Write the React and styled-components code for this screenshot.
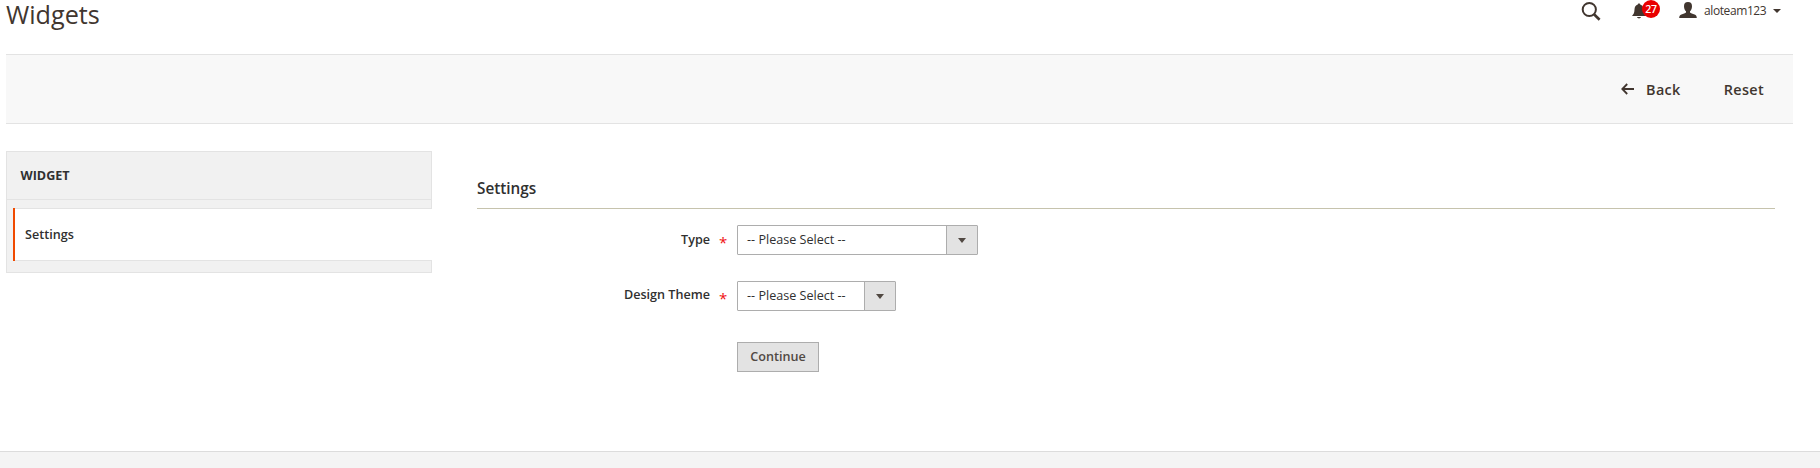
import React from 'react';
import styled, { createGlobalStyle } from 'styled-components';

const GlobalStyle = createGlobalStyle`
  * { box-sizing: border-box; }
  body {
    margin: 0;
    background: #fff;
    color: #303030;
    font-family: 'Open Sans', 'Noto Sans', sans-serif;
    font-size: 12.6px;
    line-height: 17px;
  }
`;

const Page = styled.div`
  display: flex;
  flex-direction: column;
  height: 468px;
`;

const Header = styled.header`
  display: flex;
  justify-content: space-between;
  height: 54px;
  padding: 0 39px 0 6px;
`;

const Title = styled.h1`
  margin: 0;
  color: #41362f;
  font-size: 25.2px;
  font-weight: 400;
  line-height: 28px;
`;

const Tools = styled.div`
  display: flex;
  align-items: flex-start;
  color: #41362f;
`;

const Tool = styled.div`
  position: relative;
  display: flex;
  margin-right: ${(p) => p.$gap || 0}px;
  padding-top: ${(p) => p.$top || 0}px;
`;

const Badge = styled.span`
  position: absolute;
  left: 10px;
  top: 0;
  width: 18px;
  height: 18px;
  border-radius: 9px;
  background: #e90000;
  color: #fff;
  font-size: 10.5px;
  font-weight: 600;
  line-height: 18px;
  letter-spacing: -0.3px;
  text-align: center;
`;

const Account = styled.div`
  display: flex;
  align-items: flex-start;
`;

const UserName = styled.span`
  width: 63px;
  margin: 2px 6px 0 7px;
  font-size: 12px;
  line-height: 17px;
  letter-spacing: -0.4px;
  white-space: nowrap;
`;

const Caret = styled.span`
  width: 0;
  height: 0;
  margin-top: ${(p) => p.$top || 0}px;
  border: solid transparent;
  border-width: ${(p) => p.$size || 4}px ${(p) => p.$half || 3.5}px 0;
  border-top-color: ${(p) => p.$color || '#41362f'};
`;

const ActionBar = styled.div`
  display: flex;
  justify-content: flex-end;
  align-items: center;
  gap: 43px;
  height: 70px;
  margin: 0 27px 0 6px;
  padding: 2px 29px 0 0;
  border: solid #e3e3e3;
  border-width: 1px 0;
  background: #f8f8f8;
`;

const Action = styled.button`
  display: flex;
  align-items: center;
  padding: 0;
  border: 0;
  background: none;
  color: #41362f;
  font: 600 14.4px/20px 'Open Sans', sans-serif;
  letter-spacing: 0.36px;

  svg { margin: -3px 12px 0 0; }
`;

const Body = styled.main`
  display: flex;
  flex: 1;
  align-items: flex-start;
  padding: 27px 45px 0 6px;
`;

const Nav = styled.nav`
  width: 426px;
  height: 122px;
  margin-right: 45px;
  border: 1px solid #e3e3e3;
  background: #f1f1f1;
`;

const NavTitle = styled.div`
  height: 48px;
  padding: 15px 13.5px 0;
  border-bottom: 1px solid #e3e3e3;
  font-weight: 700;
`;

const NavItem = styled.div`
  position: relative;
  height: 53px;
  margin: 8px -1px 0 6px;
  padding: 17px 12px 0;
  border: solid #e3e3e3;
  border-width: 1px 0;
  background: #fff;
  font-weight: 600;

  &::before {
    content: '';
    position: absolute;
    left: 0;
    top: -1px;
    bottom: -1px;
    width: 2px;
    background: #f04a00;
  }
`;

const Form = styled.section`
  flex: 1;
`;

const Legend = styled.h2`
  height: 58px;
  margin: 0 0 16px;
  padding-top: 27px;
  border-bottom: 1px solid #c6c3ad;
  font-size: 15.3px;
  font-weight: 600;
  line-height: 21px;
`;

const Field = styled.div`
  display: flex;
  height: 30px;
  margin-bottom: ${(p) => p.$after || 0}px;
`;

const Label = styled.label`
  width: 233px;
  padding-top: ${(p) => p.$top}px;
  font-weight: 600;
  text-align: right;
`;

const Required = styled.span`
  width: 27px;
  padding: 9px 0 0 9px;
  color: #f01010;
  font-size: 15px;
  line-height: 17px;
`;

const Select = styled.div`
  display: flex;
  width: ${(p) => p.$width}px;
  height: 30px;
  border: 1px solid #adadad;
  border-radius: 1px;
  background: #fff;
`;

const SelectValue = styled.span`
  flex: 1;
  padding: 5px 0 0 9px;
`;

const SelectArrow = styled.span`
  display: flex;
  align-items: center;
  justify-content: center;
  width: 31px;
  border-left: 1px solid #adadad;
  background: #e3e3e3;
`;

const Button = styled.button`
  width: 82px;
  height: 30px;
  margin-left: 260px;
  padding: 0 0 1px;
  border: 1px solid #adadad;
  background: #e3e3e3;
  color: #514943;
  font: 600 12.6px/17px 'Open Sans', sans-serif;
`;

const Footer = styled.footer`
  height: 17px;
  border-top: 1px solid #dcdcdc;
  background: #f4f4f4;
`;

const SearchIcon = () => (
  <svg width="20" height="20" viewBox="0 0 20 20" fill="none" stroke="currentColor">
    <circle cx="8.3" cy="8.5" r="6.6" strokeWidth="2" />
    <path d="M13 13.2l5.6 5.5" strokeWidth="2.6" />
  </svg>
);

const BellIcon = () => (
  <svg width="14" height="16" viewBox="0 0 14 16" fill="currentColor">
    <path d="M7 0.4c.8 0 1.2.5 1.2 1.2C10.4 2.3 11.4 4 11.5 6.5c.1 3 .7 4.6 2.5 6.5H0c1.8-1.9 2.4-3.5 2.5-6.5C2.6 4 3.6 2.3 5.8 1.6 5.8.9 6.2.4 7 .4z" />
    <path d="M5 14h4c-.4 1-1.1 1.4-2 1.4S5.4 15 5 14z" />
  </svg>
);

const UserIcon = () => (
  <svg width="18" height="16" viewBox="0 0 18 16" fill="currentColor">
    <path d="M9 0c2.7 0 4.1 1.6 4 4.2-.1 2.4-.8 4-2 5v1.3c.7.8 2.7 1.2 4.6 2 1.5.6 2.2 1.4 2.2 3.500H.2c0-2.100.7-2.900 2.200-3.500 1.900-.8 3.900-1.200 4.600-2V9.200C5.800 8.200 5.100 6.600 5 4.200 4.900 1.600 6.300 0 9 0z" />
  </svg>
);

const BackIcon = () => (
  <svg width="13" height="12" viewBox="0 0 13 12" fill="none" stroke="currentColor" strokeWidth="1.8">
    <path d="M6.2 1L1.3 6l4.9 5M1.5 6H13" />
  </svg>
);

const SelectField = ({ label, width, after, labelTop }) => (
  <Field $after={after}>
    <Label $top={labelTop}>{label}</Label>
    <Required>*</Required>
    <Select $width={width}>
      <SelectValue>-- Please Select --</SelectValue>
      <SelectArrow>
        <Caret $color="#514943" $half={4} $size={5} />
      </SelectArrow>
    </Select>
  </Field>
);

export default function App() {
  return (
    <Page>
      <GlobalStyle />
      <Header>
        <Title>Widgets</Title>
        <Tools>
          <Tool $gap={31} $top={1}><SearchIcon /></Tool>
          <Tool $gap={33} $top={3}>
            <BellIcon />
            <Badge>27</Badge>
          </Tool>
          <Account>
            <Tool $top={2}><UserIcon /></Tool>
            <UserName>aloteam123</UserName>
            <Caret $top={9} $half={4} />
          </Account>
        </Tools>
      </Header>
      <ActionBar>
        <Action><BackIcon />Back</Action>
        <Action>Reset</Action>
      </ActionBar>
      <Body>
        <Nav>
          <NavTitle>WIDGET</NavTitle>
          <NavItem>Settings</NavItem>
        </Nav>
        <Form>
          <Legend>Settings</Legend>
          <SelectField label="Type" width={241} after={26} labelTop={6} />
          <SelectField label="Design Theme" width={159} after={31} labelTop={5} />
          <Button>Continue</Button>
        </Form>
      </Body>
      <Footer />
    </Page>
  );
}
